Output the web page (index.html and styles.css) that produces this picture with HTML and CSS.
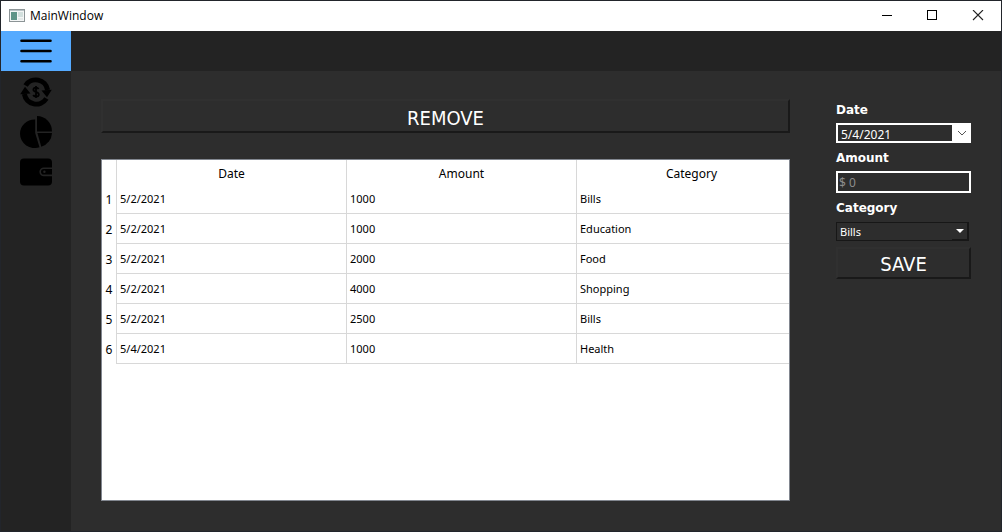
FILE: index.html
```html
<!DOCTYPE html>
<html lang="en">
<head>
<meta charset="utf-8">
<title>MainWindow</title>
<meta name="viewport" content="width=device-width, initial-scale=1">
<link rel="stylesheet" href="styles.css">
</head>
<body>
<div class="window">
  <header class="titlebar">
    <svg class="app-icon" width="16" height="14" viewBox="0 0 16 14" aria-hidden="true">
      <rect x="0.5" y="0.5" width="15" height="12" fill="#f4f6f6" stroke="#8c9496"/>
      <path d="M1 1.5h14" stroke="#b9c3c6"/>
      <rect x="2" y="3" width="6" height="8" fill="#5f9488"/>
      <rect x="9" y="3" width="5" height="5" fill="#d3e0de"/>
      <rect x="9" y="9" width="5" height="2" fill="#e4e9e9"/>
    </svg>
    <h1 class="title">MainWindow</h1>
    <div class="window-controls">
      <button class="window-control" type="button" aria-label="Minimize">
        <svg width="12" height="12" viewBox="0 0 12 12"><path d="M2 5.500h10" stroke="#000" fill="none"/></svg>
      </button>
      <button class="window-control" type="button" aria-label="Maximize">
        <svg width="12" height="12" viewBox="0 0 12 12"><rect x="1.5" y="0.5" width="9" height="9" stroke="#000" fill="none"/></svg>
      </button>
      <button class="window-control" type="button" aria-label="Close">
        <svg width="12" height="12" viewBox="0 0 12 12"><path d="M1 0l10 10M11 0L1 10" stroke="#222" stroke-width="1.1" fill="none"/></svg>
      </button>
    </div>
  </header>

  <div class="toolbar">
    <button class="menu-button" type="button" aria-label="Menu">
      <svg width="34" height="26" viewBox="0 0 34 26"><path d="M2.500 2.800h29M2.500 13h29M2.500 23.200h29" stroke="#000" stroke-width="2.600" stroke-linecap="round"/></svg>
    </button>
  </div>

  <div class="body">
    <nav class="sidebar">
      <button class="nav-button" type="button" aria-label="Transactions">
        <svg width="32" height="32" viewBox="0 0 32 32" fill="none">
          <path d="M5.600 9.500A12 12 0 0 1 27.600 14" stroke="#000" stroke-width="5"/>
          <path d="M26.400 22.500A12 12 0 0 1 4.400 18" stroke="#000" stroke-width="5"/>
          <path d="M21.500 14.500l10.300-.7-4.800 7.400zM10.500 17.500L.2 18.200l4.800-7.400z" fill="#000"/>
          <path d="M18.600 13c-.5-.9-1.400-1.300-2.600-1.300-1.500 0-2.600.8-2.600 2 0 2.900 5.400 1.700 5.400 4.700 0 1.300-1.200 2.100-2.800 2.100-1.300 0-2.300-.5-2.800-1.500M16 10v12" stroke="#000" stroke-width="1.800"/>
        </svg>
      </button>
      <button class="nav-button" type="button" aria-label="Statistics">
        <svg width="32" height="32" viewBox="0 0 32 32" fill="#000">
          <path d="M15.200 3.500V17l4.300 14.200A14.600 14.200 0 0 1 0 17.800A14.600 14.300 0 0 1 15.200 3.500z"/>
          <path d="M17 0a15 15.500 0 0 1 15 15.500H17z"/>
          <path d="M17.400 17H32a15 15 0 0 1-10.700 13.800z"/>
        </svg>
      </button>
      <button class="nav-button" type="button" aria-label="Wallet">
        <svg width="32" height="32" viewBox="0 0 32 32">
          <rect x="0" y="2.500" width="32" height="27" rx="4" fill="#000"/>
          <path d="M32 12.200h-8.200a3.600 3.600 0 0 0 0 7.200H32" fill="none" stroke="#232323" stroke-width="1.600"/>
          <circle cx="24.400" cy="15.800" r="1.200" fill="#232323"/>
        </svg>
      </button>
    </nav>

    <main class="content">
      <section class="records">
        <button class="action action-remove" type="button">REMOVE</button>
        <div class="table-frame">
          <table class="table">
            <thead>
              <tr><td class="corner"></td><th scope="col">Date</th><th scope="col">Amount</th><th scope="col">Category</th></tr>
            </thead>
            <tbody>
              <tr><th scope="row">1</th><td>5/2/2021</td><td>1000</td><td>Bills</td></tr>
              <tr><th scope="row">2</th><td>5/2/2021</td><td>1000</td><td>Education</td></tr>
              <tr><th scope="row">3</th><td>5/2/2021</td><td>2000</td><td>Food</td></tr>
              <tr><th scope="row">4</th><td>5/2/2021</td><td>4000</td><td>Shopping</td></tr>
              <tr><th scope="row">5</th><td>5/2/2021</td><td>2500</td><td>Bills</td></tr>
              <tr><th scope="row">6</th><td>5/4/2021</td><td>1000</td><td>Health</td></tr>
            </tbody>
          </table>
        </div>
      </section>

      <form class="form">
        <label class="label" for="date">Date</label>
        <div class="date-field">
          <input class="date-input" id="date" type="text" value="5/4/2021">
          <button class="date-toggle" type="button" aria-label="Open calendar">
            <svg width="10" height="6" viewBox="0 0 10 6"><path d="M1 1l4 4 4-4" fill="none" stroke="#555"/></svg>
          </button>
        </div>
        <label class="label" for="amount">Amount</label>
        <input class="amount-input" id="amount" type="text" placeholder="$ 0">
        <label class="label" for="category">Category</label>
        <div class="select-field">
          <select class="select" id="category">
            <option>Bills</option>
            <option>Education</option>
            <option>Food</option>
            <option>Shopping</option>
            <option>Health</option>
          </select>
          <span class="select-arrow">
            <svg width="8" height="4" viewBox="0 0 8 4"><path d="M0 0h8L4 4z" fill="#fff"/></svg>
          </span>
        </div>
        <button class="action" type="button">SAVE</button>
      </form>
    </main>
  </div>
</div>
</body>
</html>
```

FILE: styles.css
```css
* {
  box-sizing: border-box;
}

body {
  margin: 0;
  font-family: "Noto Sans", "Open Sans", sans-serif;
  font-size: 12px;
  background: #2d2d2d;
}

button,
input,
select {
  margin: 0;
  font-family: inherit;
}

svg {
  display: block;
}

.window {
  display: flex;
  flex-direction: column;
  min-height: 100vh;
  border: 1px solid #22252b;
}

.titlebar {
  display: flex;
  align-items: center;
  height: 30px;
  padding-left: 8px;
  background: #fff;
}

.title {
  flex: 1;
  margin: 0 0 0 5px;
  font-family: "Open Sans", sans-serif;
  font-size: 12px;
  font-weight: 400;
  line-height: 16px;
  color: #000;
}

.window-controls {
  display: flex;
}

.window-control {
  display: grid;
  place-items: center;
  width: 46px;
  height: 30px;
  padding: 0;
  border: 0;
  background: none;
}

.toolbar {
  display: flex;
  height: 40px;
  background: #232323;
}

.menu-button {
  display: grid;
  place-items: center;
  width: 70px;
  padding: 0;
  border: 0;
  background: #55aaff;
}

.body {
  display: flex;
  flex: 1;
}

.sidebar {
  display: flex;
  flex-direction: column;
  width: 70px;
  background: #232323;
}

.nav-button {
  display: grid;
  place-items: center;
  height: 40px;
  padding: 2px 0 0;
  border: 0;
  background: none;
}

.content {
  display: flex;
  flex: 1;
  gap: 46px;
  min-width: 0;
  padding: 28px 30px 30px;
}

.records {
  display: flex;
  flex: 1;
  flex-direction: column;
  gap: 26px;
  min-width: 0;
}

.action {
  height: 32px;
  padding: 2px 0 0;
  border: 2px solid;
  border-color: #303030 #191919 #191919 #303030;
  background: #2d2d2d;
  color: #fff;
  font-family: "DejaVu Sans Condensed", "Noto Sans", sans-serif;
  font-size: 20px;
  line-height: 26px;
}

.action-remove {
  height: 34px;
  padding-top: 4px;
}

.table-frame {
  flex: 1;
  overflow: hidden;
  border: 1px solid #828790;
  background: #fff;
}

.table {
  width: 705px;
  table-layout: fixed;
  border-collapse: separate;
  border-spacing: 0;
  color: #000;
}

.table th,
.table td {
  height: 30px;
  padding: 0 3px;
  border-right: 1px solid #d8d8d8;
  border-bottom: 1px solid #d8d8d8;
  font-size: 11px;
  font-weight: 400;
  text-align: left;
}

.table thead th,
.table thead td {
  height: 24px;
  padding: 2px 0 0;
  border-bottom: 0;
  font-size: 12px;
  text-align: center;
}

.table .corner {
  width: 15px;
}

.table tbody th {
  padding: 0;
  border-bottom: 0;
  font-size: 12px;
  text-align: center;
}

.form {
  display: flex;
  flex-direction: column;
  width: 135px;
}

.label {
  margin-top: 1px;
  font-family: "DejaVu Sans", sans-serif;
  font-size: 12px;
  font-weight: 700;
  line-height: 20px;
  color: #fff;
}

.date-field {
  display: flex;
  height: 20px;
  margin: 3px 0 4px;
  border: 1px solid #fff;
  background: #fff;
}

.date-input {
  flex: 1;
  min-width: 0;
  margin: 1px;
  padding: 2px 3px 0;
  border: 0;
  background: #2d2d2d;
  color: #fff;
  font-size: 12px;
}

.date-toggle {
  display: grid;
  place-items: center;
  width: 17px;
  padding: 0;
  border: 0;
  background: #fff;
}

.amount-input {
  width: 100%;
  height: 22px;
  margin: 3px 0 4px;
  padding: 0 1px;
  border: 2px solid #fff;
  background: #2d2d2d;
  color: #fff;
  font-size: 12px;
}

.amount-input::placeholder {
  color: #8c8c8c;
}

.select-field {
  position: relative;
  margin: 4px 2px 6px 0;
}

.select {
  display: block;
  width: 100%;
  height: 19px;
  padding: 0 18px 0 3px;
  border: 1px solid #171717;
  border-radius: 0;
  background: #2d2d2d;
  color: #fff;
  font-size: 11px;
  appearance: none;
}

.select-arrow {
  position: absolute;
  top: 1px;
  right: 1px;
  bottom: 1px;
  display: grid;
  place-items: center;
  width: 16px;
  border-right: 1px solid #171717;
  border-bottom: 1px solid #171717;
  pointer-events: none;
}
```
